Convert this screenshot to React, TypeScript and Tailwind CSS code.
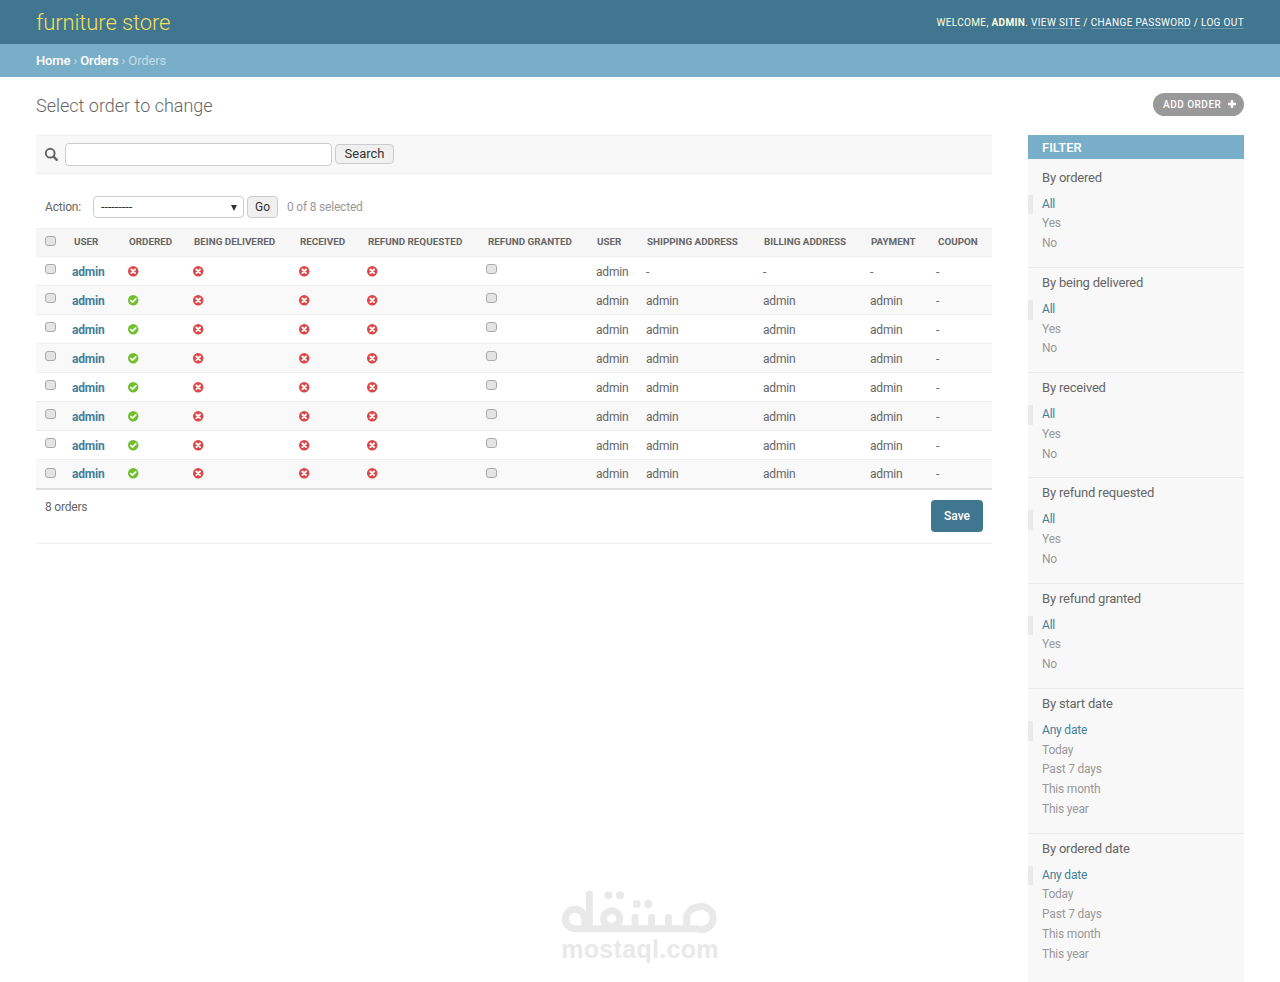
import React from "react";

const XIcon = () => (
  <svg width="13" height="13" viewBox="0 0 13 13" className="block">
    <circle cx="5.2" cy="6.3" r="5.2" fill="#dd4646" />
    <path d="M3.4 4.5l3.6 3.6M7 4.5l-3.6 3.6" stroke="#fff" strokeWidth="1.9" strokeLinecap="round" />
  </svg>
);
const CheckIcon = () => (
  <svg width="13" height="13" viewBox="0 0 13 13" className="block">
    <circle cx="5.2" cy="6.3" r="5.2" fill="#70bf2b" />
    <path d="M2.7 6.5l1.8 1.7 3.3-3.4" stroke="#fff" strokeWidth="1.7" fill="none" strokeLinecap="round" strokeLinejoin="round" />
  </svg>
);
const Box = () => (
  <input
    type="checkbox"
    readOnly
    className="block appearance-none w-[10.5px] h-[10.5px] rounded-[3px] border border-[#aaaaaa] bg-[#e4e4e4] m-0"
  />
);

const heads = [
  "User", "Ordered", "Being delivered", "Received", "Refund requested", "Refund granted",
  "User", "Shipping address", "Billing address", "Payment", "Coupon",
];
const widths = [26, 56, 65, 106, 68, 120, 109, 50, 117, 107, 66, 66];

const filters = [
  { t: "By ordered", o: ["All", "Yes", "No"] },
  { t: "By being delivered", o: ["All", "Yes", "No"] },
  { t: "By received", o: ["All", "Yes", "No"] },
  { t: "By refund requested", o: ["All", "Yes", "No"] },
  { t: "By refund granted", o: ["All", "Yes", "No"] },
  { t: "By start date", o: ["Any date", "Today", "Past 7 days", "This month", "This year"] },
  { t: "By ordered date", o: ["Any date", "Today", "Past 7 days", "This month", "This year"] },
];

const rows = [0, 1, 2, 3, 4, 5, 6, 7];

export default function App() {
  return (
    <div className="relative min-h-[982px] bg-white text-[12px] tracking-[-0.2px] text-[#333333] font-['Roboto',sans-serif] overflow-hidden">
      <header className="h-11 bg-[#417690] flex items-center justify-between px-9">
        <div className="text-[22px] tracking-[-0.1px] font-light text-[#f5dd5d] leading-none mt-[1px]">furniture store</div>
        <div className="text-[10px] uppercase tracking-[0.35px] text-[#ffffdd] mt-[1px]">
          Welcome, <strong className="font-bold">admin</strong>.{" "}
          <a className="border-b border-white/25 text-white">View site</a> /{" "}
          <a className="border-b border-white/25 text-white">Change password</a> /{" "}
          <a className="border-b border-white/25 text-white">Log out</a>
        </div>
      </header>
      <nav className="h-[33px] bg-[#79aec8] flex items-center px-9 pt-[1px] text-[13px] tracking-[-0.12px] text-[#c4dce8]">
        <a className="text-white font-medium">Home</a>
        <span className="mx-[3px]">›</span>
        <a className="text-white font-medium">Orders</a>
        <span className="mx-[3px]">›</span>
        <span>Orders</span>
      </nav>

      <main className="px-9 pt-4">
        <div className="flex items-center justify-between h-[23px] mb-[19px]">
          <h1 className="text-[18px] tracking-normal font-light text-[#666666] mt-[1px]">Select order to change</h1>
          <a className="h-[23px] w-[91px] rounded-[15px] bg-[#999999] text-white text-[10px] font-medium uppercase tracking-[0.5px] flex items-center pl-[10px] pb-[1px] gap-[6px]">
            Add order
            <svg width="10" height="10" viewBox="0 0 10 10"><path d="M5 1v8M1 5h8" stroke="#fff" strokeWidth="2.4" /></svg>
          </a>
        </div>

        <div className="flex gap-9">
          <section className="w-[956px]">
            <div className="h-[39px] bg-[#f8f8f8] border-y border-[#eeeeee] flex items-center pl-[8px]">
              <svg width="15" height="15" viewBox="0 0 15 15" className="mr-[6px] -mt-[1px]">
                <circle cx="6.2" cy="6.2" r="4.4" fill="none" stroke="#666666" strokeWidth="2" />
                <path d="M9.6 9.6l3.2 3.2" stroke="#666666" strokeWidth="2.4" strokeLinecap="round" />
              </svg>
              <input className="w-[267px] h-[23px] bg-white border border-[#cccccc] rounded-[4px]" />
              <button className="ml-[3px] w-[59px] h-[20px] -mt-[2px] rounded-[4px] border border-[#cccccc] bg-[#f0f0f0] text-[13px] tracking-normal text-[#333333] leading-none">
                Search
              </button>
            </div>

            <div className="h-[54px] flex items-center pl-[9px] pt-[12px] text-[#666666]">
              <span className="w-[48px]">Action:</span>
              <div className="relative w-[151px] h-[22px] border border-[#cccccc] rounded-[4px] bg-white text-[#333333] flex items-center pl-[7px] text-[12.5px] tracking-normal">
                <span>---------</span>
                <span className="absolute right-[6px] top-[8px] w-0 h-0 border-x-[3.5px] border-x-transparent border-t-[6px] border-t-[#333333]" />
              </div>
              <button className="ml-[3px] w-[31px] h-[22px] rounded-[4px] border border-[#cccccc] bg-[#f0f0f0] text-[12px] tracking-normal text-[#333333]">Go</button>
              <span className="ml-[9px] text-[#999999]">0 of 8 selected</span>
            </div>

            <table className="w-[956px] table-fixed border-collapse">
              <colgroup>
                {widths.map((w, i) => <col key={i} style={{ width: w }} />)}
              </colgroup>
              <thead>
                <tr className="h-[28px] bg-[#f6f6f6] border-y border-[#eeeeee]">
                  <th className="pl-[9px] pb-[3px] align-middle"><Box /></th>
                  {heads.map((h, i) => (
                    <th
                      key={i}
                      className={`${i === 0 || i === 10 ? "pl-[12px]" : "pl-[11px]"} text-left text-[9.85px] tracking-normal font-bold uppercase text-[#666666] whitespace-nowrap`}
                    >
                      {h}
                    </th>
                  ))}
                </tr>
              </thead>
              <tbody>
                {rows.map((r) => (
                  <tr key={r} className={`h-[29px] border-b ${r === 7 ? "border-b-2 border-[#dddddd]" : "border-[#eeeeee]"} ${r % 2 ? "bg-[#f9f9f9]" : "bg-white"}`}>
                    <td className={`pl-[9px] ${r === 7 ? "pb-[2px]" : "pb-[4px]"}`}><Box /></td>
                    <td className="pl-[10px] pt-[1px] font-bold text-[#447e9b]">admin</td>
                    <td className="pl-[10px]">{r === 0 ? <XIcon /> : <CheckIcon />}</td>
                    <td className="pl-[10px]"><XIcon /></td>
                    <td className="pl-[10px]"><XIcon /></td>
                    <td className="pl-[10px]"><XIcon /></td>
                    <td className={`pl-[9px] ${r === 7 ? "pb-[2px]" : "pb-[4px]"}`}><Box /></td>
                    <td className="pl-[10px] pt-[1px] text-[#666666]">admin</td>
                    {[0, 1, 2].map((c) => (
                      <td key={c} className="pl-[10px] pt-[1px] text-[#666666]">{r === 0 ? "-" : "admin"}</td>
                    ))}
                    <td className="pl-[10px] pt-[1px] text-[#666666]">-</td>
                  </tr>
                ))}
              </tbody>
            </table>

            <div className="flex justify-between items-start pt-[10px] pb-[11px] px-[9px] border-b border-[#eeeeee]">
              <span className="leading-[14px] text-[#666666]">8 orders</span>
              <button className="w-[52px] h-[32px] rounded-[4px] bg-[#417690] text-white text-[12px] tracking-normal font-medium">Save</button>
            </div>
          </section>

          <aside className="w-[216px] bg-[#f8f8f8] pb-[5px]">
            <h2 className="h-6 bg-[#79aec8] text-white text-[13px] tracking-normal font-medium uppercase pl-[14px] pt-[1px] flex items-center">Filter</h2>
            <div className="pt-[3.5px]">
              {filters.map((f, i) => (
                <div key={f.t} className={`pt-[5px] pb-[13px] ${i < filters.length - 1 ? "border-b border-[#eaeaea]" : ""}`}>
                  <h3 className="h-5 pl-[14px] text-[13px] tracking-[-0.2px] leading-5 text-[#666666]">{f.t}</h3>
                  <ul className="mt-[7px]">
                    {f.o.map((o, j) => (
                      <li
                        key={o}
                        className={`h-[19.75px] leading-[19.75px] pl-[9px] border-l-[5px] ${j === 0 ? "border-[#eaeaea] text-[#447e9b]" : "border-transparent text-[#999999]"}`}
                      >
                        {o}
                      </li>
                    ))}
                  </ul>
                </div>
              ))}
            </div>
          </aside>
        </div>
      </main>

      <div className="absolute left-[540px] top-[870px] w-[200px] h-[110px] flex flex-col items-center pointer-events-none">
        <svg width="200" height="67" viewBox="0 0 600 201" className="block">
          <g fill="none" stroke="#e9e9e9" strokeWidth="21" strokeLinecap="round" strokeLinejoin="round">
            <path d="M148 72V176H105A29 29 0 1 1 105 118A29 29 0 0 1 134 147V176" />
            <path d="M148 176H470A35 35 0 1 0 470 112A35 35 0 0 0 440 147V176" />
            <circle cx="215" cy="146" r="24" />
            <path d="M285 176V142M335 176V142M385 176V142" />
          </g>
          <g fill="#e9e9e9">
            <circle cx="205" cy="76" r="12" /><circle cx="240" cy="76" r="12" />
            <circle cx="290" cy="102" r="12" /><circle cx="325" cy="102" r="12" />
          </g>
        </svg>
        <div className="text-[25px] font-bold text-[#e9e9e9] leading-none font-['Liberation_Sans',sans-serif] tracking-[0.3px]">mostaql.com</div>
      </div>
    </div>
  );
}
